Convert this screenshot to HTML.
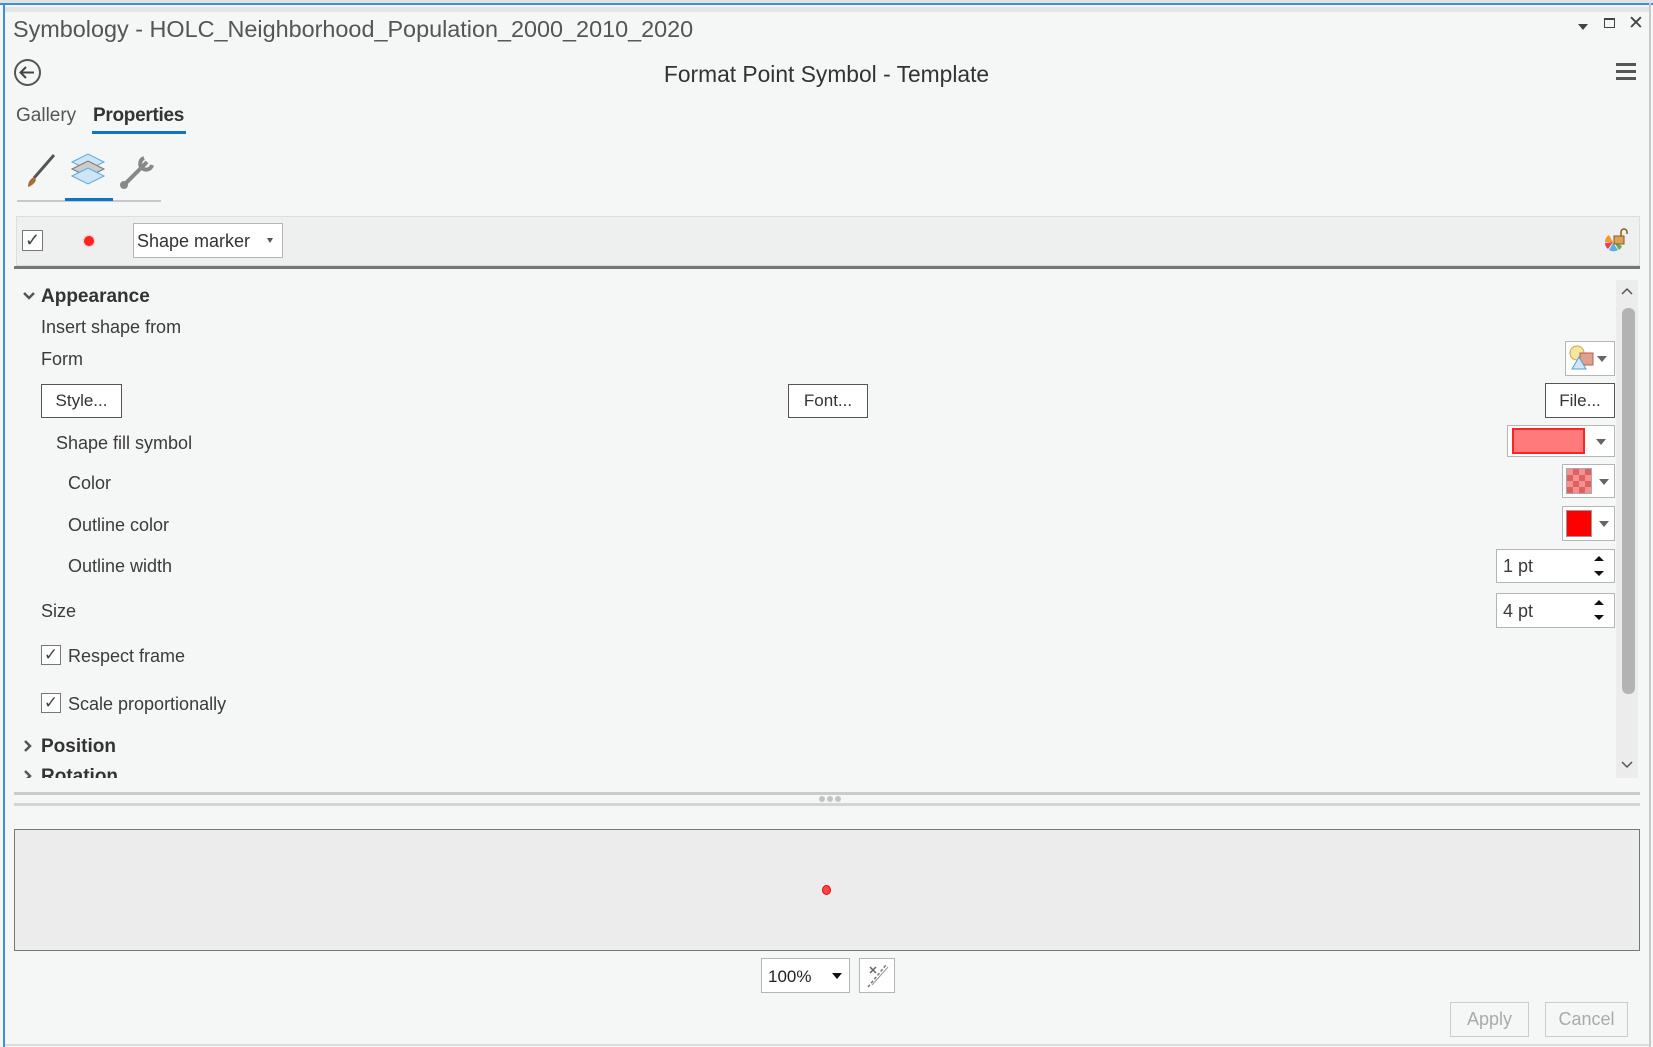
<!DOCTYPE html>
<html><head><meta charset="utf-8"><style>
*{margin:0;padding:0;box-sizing:border-box}
body{width:1653px;height:1047px;background:#f5f6f6;font-family:"Liberation Sans",sans-serif;color:#3b3b3b;position:relative;overflow:hidden}
.a{position:absolute;white-space:nowrap}
.t{font-size:18px;line-height:22px}
.btn{position:absolute;background:#fff;border:1px solid #555;font-size:17px;text-align:center;color:#333}
.dd{position:absolute;background:#fff;border:1px solid #b5b5b5}
.tri{position:absolute;width:0;height:0;border-left:5px solid transparent;border-right:5px solid transparent;border-top:6px solid #666}
</style></head><body>
<div class="a" style="left:0;top:0;width:1653px;height:4px;background:#dfe3e8"></div>
<div class="a" style="left:0;top:3px;width:1653px;height:2px;background:#3c8fd8"></div>
<div class="a" style="left:3px;top:3px;width:2px;height:1044px;background:#3c8fd8"></div>
<div class="a" style="left:1649px;top:3px;width:2px;height:1044px;background:#c9c9c9"></div>
<div class="a" style="left:5px;top:7px;width:1644px;height:5px;background:#e4e4e4"></div>
<div class="a" style="left:13px;top:15px;font-size:23.4px;line-height:28px;color:#555">Symbology - HOLC_Neighborhood_Population_2000_2010_2020</div>
<div class="a" style="left:1578px;top:24px;width:0;height:0;border-left:5px solid transparent;border-right:5px solid transparent;border-top:6px solid #444"></div>
<div class="a" style="left:1604px;top:18px;width:11px;height:10px;border:1px solid #444;border-top-width:2px"></div>
<div class="a" style="left:1628px;top:12px;font-size:19px;color:#444">✕</div>
<svg class="a" style="left:13px;top:58px" width="29" height="29"><circle cx="14.5" cy="14.5" r="12.5" fill="none" stroke="#555" stroke-width="2"/><path d="M21 14.5H8M13 9l-5.5 5.5L13 20" fill="none" stroke="#444" stroke-width="2"/></svg>
<div class="a" style="left:0;width:1653px;top:61px;text-align:center;font-size:22.8px;line-height:26px;color:#333">Format Point Symbol - Template</div>
<div class="a" style="left:1616px;top:63px;width:20px;height:3px;background:#555;box-shadow:0 7px 0 #555,0 14px 0 #555"></div>
<div class="a t" style="left:16px;top:105px;font-size:19px;color:#555">Gallery</div>
<div class="a t" style="left:93px;top:105px;font-size:19px;color:#333;font-weight:bold;letter-spacing:-0.3px">Properties</div>
<div class="a" style="left:92px;top:131px;width:94px;height:3px;background:#0f74c6"></div>
<svg class="a" style="left:24px;top:152px" width="140" height="40">
<path d="M30 3 L10 26" stroke="#555" stroke-width="3"/><path d="M10 25 Q4 28 4 35 Q10 33 12 28Z" fill="#a0703a"/>
<path d="M48 10 L64 2 L80 10 L64 18Z" fill="#cde6f7" stroke="#5aa9e0"/>
<path d="M48 17 L64 9 L80 17 L64 25Z" fill="#ccc" stroke="#777"/>
<path d="M48 24 L64 16 L80 24 L64 32Z" fill="#cde6f7" stroke="#5aa9e0"/>
<path d="M101 32 L123 10" stroke="#888" stroke-width="4"/><circle cx="100" cy="33" r="4" fill="#888"/><path d="M120 6 A6 6 0 1 0 128 13" stroke="#888" stroke-width="4" fill="none"/>
</svg>
<div class="a" style="left:17px;top:200px;width:144px;height:2px;background:#c8c8c8"></div>
<div class="a" style="left:65px;top:198px;width:48px;height:3px;background:#0f74c6"></div>
<div class="a" style="left:16px;top:216px;width:1624px;height:50px;background:#eef0f0;border:1px solid #ddd"></div>
<div class="a" style="left:14px;top:266px;width:1626px;height:3px;background:#777"></div>
<div class="a" style="left:22px;top:230px;width:21px;height:21px;border:1px solid #777;background:#fff;font-size:18px;line-height:19px;text-align:center;color:#444">✓</div>
<div class="a" style="left:84px;top:236px;width:10px;height:10px;border-radius:50%;background:#f22;box-shadow:0 0 2px #f66"></div>
<div class="dd" style="left:133px;top:223px;width:150px;height:35px"></div>
<div class="a t" style="left:137px;top:230px;color:#333">Shape marker</div>
<div class="tri" style="left:267px;top:238px;border-width:5px 3.5px 0;border-top-color:#555"></div>
<svg class="a" style="left:1603px;top:228px" width="26" height="26"><path d="M10 14 L2 14 A8 8 0 0 1 6 7Z" fill="#f39a2a"/><path d="M10 14 L5 21 A8 8 0 0 1 2 15Z" fill="#d45"/><path d="M10 15 L15 22 A8 8 0 0 1 6 22Z" fill="#5ab0e0"/><path d="M11 14 L19 18 A8 8 0 0 1 16 22Z" fill="#6a5"/><rect x="11" y="8" width="10" height="8" fill="#d9a25a" stroke="#8a5a20"/><path d="M18 8 V4 A3 3 0 0 1 24 4 V6" fill="none" stroke="#8a5a20" stroke-width="1.5"/></svg>
<div class="a" style="left:1616px;top:280px;width:22px;height:498px;background:#ececec"></div>
<div class="a" style="left:1622px;top:308px;width:13px;height:386px;background:#b3b3b3;border-radius:6px"></div>
<svg class="a" style="left:1620px;top:286px" width="14" height="10"><path d="M2 8 L7 3 L12 8" fill="none" stroke="#555" stroke-width="1.5"/></svg>
<svg class="a" style="left:1620px;top:760px" width="14" height="10"><path d="M2 2 L7 7 L12 2" fill="none" stroke="#555" stroke-width="1.5"/></svg>
<svg class="a" style="left:22px;top:290px" width="14" height="12"><path d="M2 3 L7 8 L12 3" fill="none" stroke="#555" stroke-width="2.5"/></svg>
<div class="a t" style="left:41px;top:286px;font-size:19px;font-weight:bold;color:#333">Appearance</div>
<div class="a t" style="left:41px;top:316px">Insert shape from</div>
<div class="a t" style="left:41px;top:348px">Form</div>
<div class="btn" style="left:41px;top:384px;width:81px;height:34px;line-height:32px">Style...</div>
<div class="btn" style="left:788px;top:384px;width:80px;height:34px;line-height:32px">Font...</div>
<div class="btn" style="left:1545px;top:383px;width:70px;height:35px;line-height:33px">File...</div>
<div class="a t" style="left:56px;top:432px">Shape fill symbol</div>
<div class="a t" style="left:68px;top:472px">Color</div>
<div class="a t" style="left:68px;top:514px">Outline color</div>
<div class="a t" style="left:68px;top:555px">Outline width</div>
<div class="a t" style="left:41px;top:600px">Size</div>
<div class="a" style="left:41px;top:645px;width:20px;height:20px;border:1px solid #777;background:#fff;font-size:17px;line-height:18px;text-align:center;color:#444">✓</div>
<div class="a t" style="left:68px;top:645px">Respect frame</div>
<div class="a" style="left:41px;top:693px;width:20px;height:20px;border:1px solid #777;background:#fff;font-size:17px;line-height:18px;text-align:center;color:#444">✓</div>
<div class="a t" style="left:68px;top:693px">Scale proportionally</div>
<svg class="a" style="left:22px;top:739px" width="12" height="14"><path d="M3 2 L8 7 L3 12" fill="none" stroke="#555" stroke-width="2.5"/></svg>
<div class="a t" style="left:41px;top:736px;font-size:19px;font-weight:bold;color:#333">Position</div>
<div class="a" style="left:14px;top:766px;width:1600px;height:12px;overflow:hidden">
<svg class="a" style="left:8px;top:3px" width="12" height="14"><path d="M3 2 L8 7 L3 12" fill="none" stroke="#555" stroke-width="2.5"/></svg>
<div class="a t" style="left:27px;top:0px;font-size:19px;font-weight:bold;color:#333">Rotation</div></div>
<div class="dd" style="left:1565px;top:341px;width:50px;height:35px"></div>
<svg class="a" style="left:1568px;top:344px" width="30" height="28"><circle cx="9" cy="9" r="7" fill="#f5e6a0" stroke="#c9a54a"/><rect x="12" y="9" width="13" height="12" fill="#e0a090" stroke="#b5604a"/><path d="M4 25 L11 13 L18 25Z" fill="#cfe8f8" stroke="#4aa3dd"/></svg>
<div class="tri" style="left:1597px;top:356px"></div>
<div class="dd" style="left:1507px;top:425px;width:108px;height:32px"></div>
<div class="a" style="left:1512px;top:428px;width:73px;height:26px;background:#ff7b7b;border:2px solid #f22"></div>
<div class="tri" style="left:1596px;top:439px"></div>
<div class="dd" style="left:1562px;top:464px;width:53px;height:34px"></div>
<div class="a" style="left:1566px;top:468px;width:26px;height:26px;border:1px solid #aaa;background:repeating-conic-gradient(#e06060 0 25%,#f59090 0 50%) 0 0/12px 12px"></div>
<div class="tri" style="left:1599px;top:479px"></div>
<div class="dd" style="left:1562px;top:506px;width:53px;height:35px"></div>
<div class="a" style="left:1566px;top:510px;width:26px;height:27px;border:1px solid #999;background:#f00"></div>
<div class="tri" style="left:1599px;top:521px"></div>
<div class="dd" style="left:1496px;top:549px;width:119px;height:34px"></div>
<div class="a t" style="left:1503px;top:555px">1 pt</div>
<svg class="a" style="left:1592px;top:553px" width="14" height="26"><path d="M2 8 L7 3 L12 8Z M2 18 L7 23 L12 18Z" fill="#111"/></svg>
<div class="dd" style="left:1496px;top:593px;width:119px;height:35px"></div>
<div class="a t" style="left:1503px;top:600px">4 pt</div>
<svg class="a" style="left:1592px;top:597px" width="14" height="26"><path d="M2 8 L7 3 L12 8Z M2 18 L7 23 L12 18Z" fill="#111"/></svg>
<div class="a" style="left:14px;top:792px;width:1626px;height:3px;background:#cbcbcb"></div>
<div class="a" style="left:14px;top:803px;width:1626px;height:3px;background:#d4d4d4"></div>
<div class="a" style="left:819px;top:796px;width:6px;height:6px;border-radius:50%;background:#c4c4c4;box-shadow:8px 0 0 #c4c4c4,16px 0 0 #c4c4c4"></div>
<div class="a" style="left:14px;top:829px;width:1626px;height:122px;background:#ececec;border:1px solid #777"></div>
<div class="a" style="left:822px;top:885px;width:9px;height:10px;border-radius:50%;background:#f44;border:1.5px solid #e00"></div>
<div class="dd" style="left:761px;top:958px;width:89px;height:35px"></div>
<div class="a t" style="left:768px;top:966px;font-size:17px;color:#222">100%</div>
<div class="tri" style="left:832px;top:973px;border-top-color:#111"></div>
<div class="dd" style="left:859px;top:958px;width:36px;height:35px"></div>
<svg class="a" style="left:862px;top:961px" width="30" height="30"><path d="M6 26 L24 4" stroke="#777" stroke-width="1.5" stroke-dasharray="3 2"/><path d="M10 24 L26 6" stroke="#999"/><path d="M8 6 L14 12 M14 6 L8 12" stroke="#666" stroke-width="1.5"/></svg>
<div class="a" style="left:1450px;top:1002px;width:79px;height:35px;border:1px solid #ccc;font-size:18px;line-height:33px;text-align:center;color:#aaa">Apply</div>
<div class="a" style="left:1545px;top:1002px;width:83px;height:35px;border:1px solid #ccc;font-size:18px;line-height:33px;text-align:center;color:#aaa">Cancel</div>
<div class="a" style="left:5px;top:1044px;width:1644px;height:2px;background:#ddd"></div>
</body></html>
